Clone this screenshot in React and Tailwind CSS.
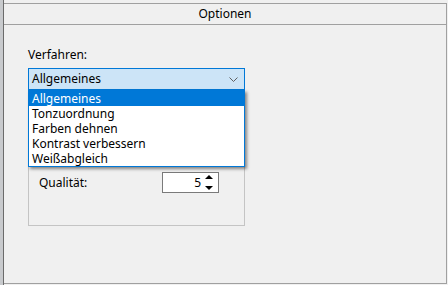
export default function App() {
  const items = ["Allgemeines", "Tonzuordnung", "Farben dehnen", "Kontrast verbessern", "Weißabgleich"];
  return (
    <div className="w-[448px] h-[285px] flex bg-[#f0f0f0] text-[12px] text-black overflow-hidden" style={{ fontFamily: '"Noto Sans", "Liberation Sans", sans-serif' }}>
      <div className="w-[3px] bg-[#c8cacd]" />
      <div className="w-px bg-[#6b6b6b]" />
      <div className="flex-1 pt-[3px] pb-px pr-px flex flex-col">
        <div className="flex-1 border-t border-r border-b border-[#a0a0a0] flex flex-col">
          <div className="h-[21px] border-b border-[#a0a0a0] flex items-center justify-center leading-none">
            <span className="-mt-px">Optionen</span>
          </div>
          <div className="pl-[24px] pt-[22px] flex flex-col">
            <div className="h-[16px] leading-[16px]">Verfahren:</div>
            <div className="relative mt-[5px] w-[217px]">
              <div className="h-[22px] border border-[#0078d7] bg-[#cce4f7] flex items-center justify-between pl-[3px] pr-[5px]">
                <span className="leading-none">Allgemeines</span>
                <svg width="9" height="5" viewBox="0 0 9 5" className="mr-[1px]">
                  <path d="M0.5 0.5 L4.5 4.5 L8.5 0.5" fill="none" stroke="#606060" strokeWidth="1" />
                </svg>
              </div>
              <div className="absolute left-0 top-[22px] w-[217px] border border-[#0078d7] bg-white z-10 shadow-[2px_2px_3px_rgba(0,0,0,0.45)] flex flex-col">
                {items.map((it, i) => (
                  <div key={it} className={(i === 0 ? "bg-[#0078d7] text-white " : "") + "h-[15px] leading-[15px] pl-[3px] whitespace-nowrap"}>
                    {it}
                  </div>
                ))}
              </div>
            </div>
            <div className="mt-[10px] w-[217px] h-[126px] border border-[#c4c4c4] flex flex-col">
              <div className="mt-[71px] flex items-center pl-[10px]">
                <span className="w-[123px] leading-none">Qualität:</span>
                <div className="w-[57px] h-[21px] border border-[#7a7a7a] bg-white flex items-center justify-end">
                  <span className="leading-none mr-[4px]">5</span>
                  <div className="flex flex-col items-center gap-[7px] mr-[5px]">
                    <svg width="8" height="4" viewBox="0 0 8 4"><path d="M0 4 L4 0 L8 4 Z" fill="#000" /></svg>
                    <svg width="8" height="4" viewBox="0 0 8 4"><path d="M0 0 L4 4 L8 0 Z" fill="#000" /></svg>
                  </div>
                </div>
              </div>
            </div>
          </div>
        </div>
      </div>
    </div>
  );
}
